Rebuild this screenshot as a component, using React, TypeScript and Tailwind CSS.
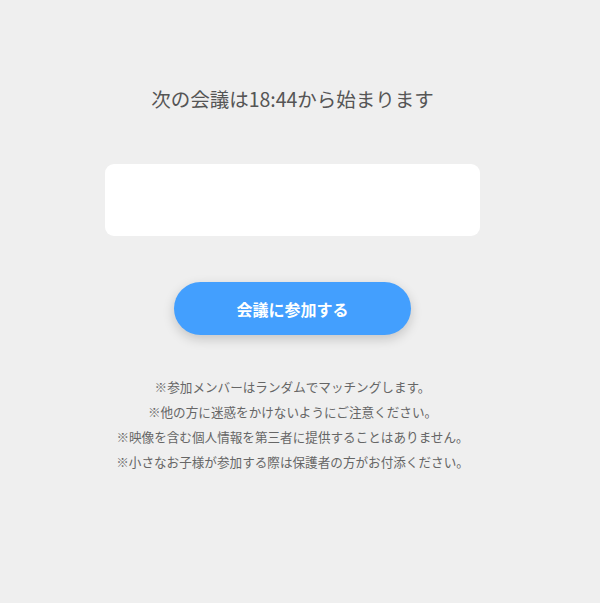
const notes = [
  '※参加メンバーはランダムでマッチングします。',
  '※他の方に迷惑をかけないようにご注意ください。',
  '※映像を含む個人情報を第三者に提供することはありません。',
  '※小さなお子様が参加する際は保護者の方がお付添ください。',
];

const App = () => {
  return (
    <div
      className="min-h-[603px] w-full bg-[#efefef]"
      style={{ fontFamily: '"Noto Sans CJK JP", "Noto Sans", sans-serif' }}
    >
      <div className="flex w-[585px] flex-col items-center pt-[85px]">
        <h1 className="text-[19.5px] leading-[28px] text-[#555555]">次の会議は18:44から始まります</h1>

        <div className="mt-[51px] h-[72px] w-[375px] rounded-[9px] bg-white" />

        <button className="mt-[46px] h-[53px] w-[237px] rounded-full bg-[#439ffe] text-[16px] font-bold text-white shadow-[0_4px_12px_rgba(0,0,0,0.18)]">
          会議に参加する
        </button>

        <div className="mt-[39px] flex flex-col items-center text-[12.6px] leading-[25px] text-[#666666]">
          {notes.map((note, index) => (
            <p key={index}>{note}</p>
          ))}
        </div>
      </div>
    </div>
  );
};

export default App;
